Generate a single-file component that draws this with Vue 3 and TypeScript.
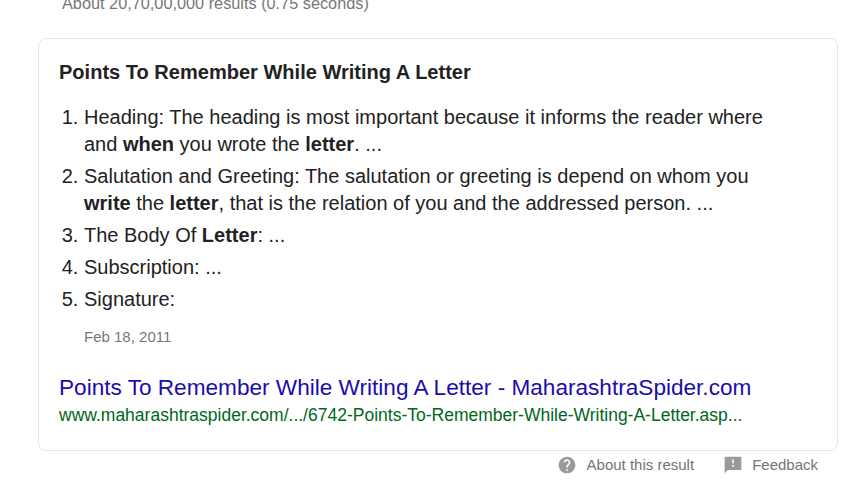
<script setup lang="ts">
interface Part { t: string; b?: boolean }
const items: Part[][] = [
  [{ t: 'Heading: The heading is most important because it informs the reader where and ' }, { t: 'when', b: true }, { t: ' you wrote the ' }, { t: 'letter', b: true }, { t: '. ...' }],
  [{ t: 'Salutation and Greeting: The salutation or greeting is depend on whom you ' }, { t: 'write', b: true }, { t: ' the ' }, { t: 'letter', b: true }, { t: ', that is the relation of you and the addressed person. ...' }],
  [{ t: 'The Body Of ' }, { t: 'Letter', b: true }, { t: ': ...' }],
  [{ t: 'Subscription: ...' }],
  [{ t: 'Signature:' }],
]
</script>

<template>
  <div class="page">
    <div class="stats">About 20,70,00,000 results (0.75 seconds)</div>
    <section class="card">
      <h2 class="title">Points To Remember While Writing A Letter</h2>
      <ol class="list">
        <li v-for="(item, i) in items" :key="i">
          <template v-for="(p, j) in item" :key="j"><b v-if="p.b">{{ p.t }}</b><template v-else>{{ p.t }}</template></template>
        </li>
      </ol>
      <div class="date">Feb 18, 2011</div>
      <a class="link">Points To Remember While Writing A Letter - MaharashtraSpider.com</a>
      <div class="url">www.maharashtraspider.com/.../6742-Points-To-Remember-While-Writing-A-Letter.asp...</div>
    </section>
    <div class="foot">
      <span class="foot-item about">
        <svg width="20" height="20" viewBox="0 0 24 24"><path fill="#9a9a9a" d="M12 2C6.48 2 2 6.48 2 12s4.480 10 10 10 10-4.480 10-10S17.520 2 12 2zm1 17h-2v-2h2v2zm2.070-7.750l-.9.920C13.450 12.900 13 13.500 13 15h-2v-.5c0-1.100.45-2.100 1.170-2.830l1.240-1.260c.37-.36.59-.86.59-1.410 0-1.100-.9-2-2-2s-2 .9-2 2H8c0-2.210 1.790-4 4-4s4 1.790 4 4c0 .88-.36 1.680-.93 2.250z"/></svg>
        About this result
      </span>
      <span class="foot-item feedback">
        <svg width="20" height="20" viewBox="0 0 24 24"><path fill="#9a9a9a" d="M3 2h18a1 1 0 0 1 1 1v14a1 1 0 0 1-1 1H6l-4 4V3a1 1 0 0 1 1-1zm10 12h-2v-2h2v2zm0-4h-2V5.500h2V10z" fill-rule="evenodd"/></svg>
        Feedback
      </span>
    </div>
  </div>
</template>

<style>
html, body { margin: 0; background: #fff; overflow: hidden; }
</style>

<style scoped>
.page {
  width: 860px;
  height: 490px;
  overflow: hidden;
  font-family: "Liberation Sans", Arial, sans-serif;
  color: #222;
}
.stats {
  height: 30px;
  margin-top: -8px;
  margin-bottom: 16px;
  padding-left: 62px;
  font-size: 16.3px;
  line-height: 22px;
  color: #777;
}
.card {
  box-sizing: border-box;
  width: 800px;
  height: 413px;
  margin-left: 38px;
  padding: 20px 20px 0;
  border: 1px solid #e6e6e6;
  border-radius: 8px;
}
.title {
  margin: 0;
  font-size: 20.05px;
  line-height: 26px;
  font-weight: bold;
  color: #222;
}
.list {
  margin: 19px 0 0;
  padding: 0 0 0 25px;
  font-size: 20px;
  line-height: 27px;
}
.list li { margin-bottom: 5px; padding-right: 40px; }
.list b { font-weight: bold; }
.date {
  margin: 14px 0 0 25px;
  font-size: 15px;
  line-height: 20px;
  color: #777;
}
.link {
  display: block;
  margin-top: 28px;
  font-size: 22.6px;
  line-height: 26px;
  color: #1a0dab;
  white-space: nowrap;
}
.url {
  margin-top: 3px;
  font-size: 17.5px;
  line-height: 22px;
  color: #006621;
  white-space: nowrap;
}
.foot {
  display: flex;
  justify-content: flex-end;
  gap: 29px;
  margin-top: 3px;
  padding-right: 42px;
  font-size: 15px;
  line-height: 22px;
  color: #70757a;
}
.foot-item { display: flex; align-items: center; gap: 9px; }
.about { gap: 10px; }
.feedback { gap: 9px; }
</style>
